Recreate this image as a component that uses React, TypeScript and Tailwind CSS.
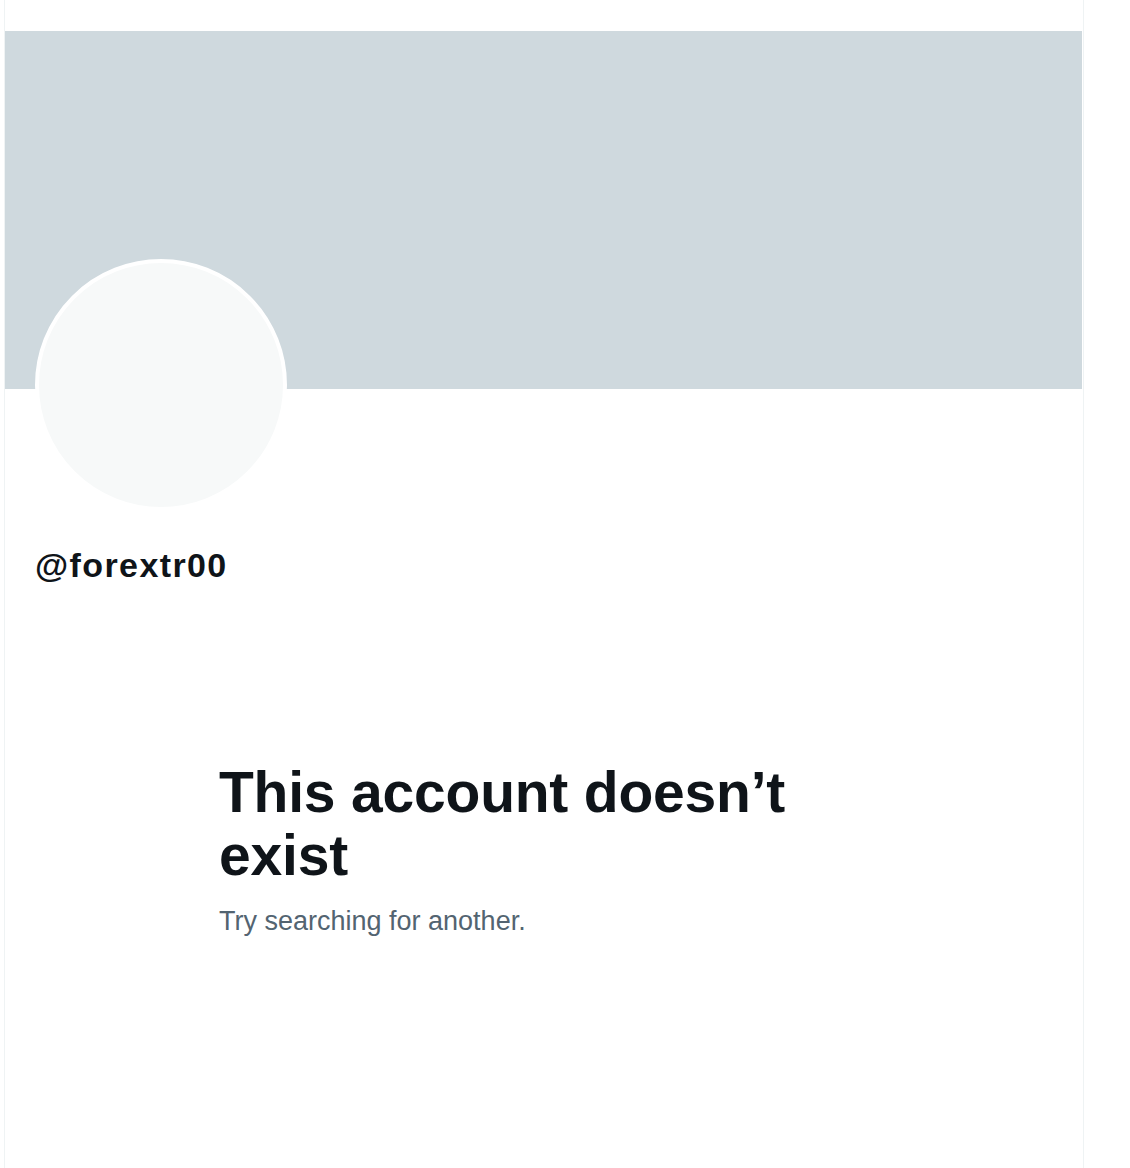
import React from "react";

export default function App() {
  return (
    <div className="min-h-screen bg-white" style={{ fontFamily: '"Liberation Sans", Arial, sans-serif' }}>
      <div className="ml-[4px] w-[1080px] min-h-screen border-x border-[#eff3f4] flex flex-col">
        <div className="h-[31px]" />
        <div className="h-[358px] bg-[#cfd9de] mr-[1px]" />
        <div className="pl-[30px]">
          <div className="-mt-[130px] w-[252px] h-[252px] rounded-full border-[4px] border-white bg-[#f7f9f9]" />
          <div className="mt-[34px] text-[34px] leading-[40px] font-bold tracking-[1.4px] text-[#0f1419]">
            @forextr00
          </div>
        </div>
        <div className="pl-[214px] mt-[176px]">
          <div className="w-[600px]">
            <h1 className="text-[57px] leading-[63px] font-bold tracking-[-0.2px] text-[#0f1419]">
              This account doesn’t exist
            </h1>
            <p className="mt-[16px] text-[27px] leading-[36px] text-[#536471]">
              Try searching for another.
            </p>
          </div>
        </div>
      </div>
    </div>
  );
}
